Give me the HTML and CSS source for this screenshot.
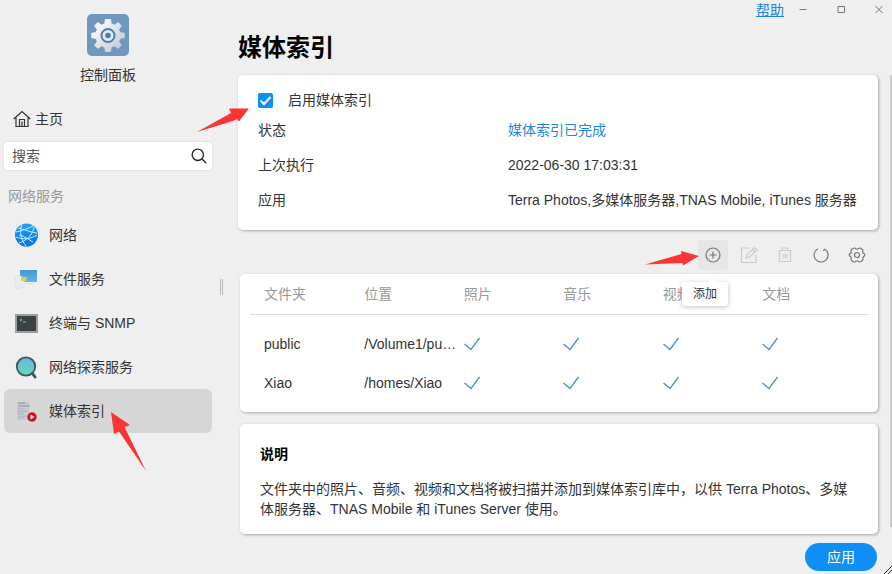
FILE: index.html
```html
<!DOCTYPE html>
<html lang="zh-CN">
<head>
<meta charset="utf-8">
<title>媒体索引</title>
<link rel="stylesheet" href="styles.css">
</head>
<body>
<svg class="defs" aria-hidden="true">
  <defs>
    <symbol id="tick" viewBox="0 0 16 14"><path d="M.5 7 7 12.500 15.500 1" fill="none" stroke="#4a8fd6" stroke-width="1.300"/></symbol>
    <linearGradient id="gear-fill" gradientUnits="userSpaceOnUse" x1="-12" y1="-12" x2="12" y2="12"><stop offset="0" stop-color="#fafbfd"/><stop offset="1" stop-color="#c6ccd8"/></linearGradient>
    <linearGradient id="globe-fill" x1="0" y1="0" x2="0" y2="1"><stop offset="0" stop-color="#1ba4fa"/><stop offset="1" stop-color="#0b6fe2"/></linearGradient>
    <linearGradient id="screen-fill" x1="0" y1="0" x2="0" y2="1"><stop offset="0" stop-color="#4199d3"/><stop offset="1" stop-color="#62b6e4"/></linearGradient>
    <linearGradient id="lens-fill" x1="0" y1="0" x2="0" y2="1"><stop offset="0" stop-color="#6cb2e2"/><stop offset="1" stop-color="#5fe0b8"/></linearGradient>
  </defs>
</svg>
<div class="window">
  <aside class="sidebar">
    <div class="brand">
      <svg width="44" height="44" viewBox="0 0 44 44" aria-hidden="true">
        <rect x="1" y="1" width="42" height="42" rx="5" fill="#7098bc"/>
        <g transform="translate(22 22.500)">
          <path fill="url(#gear-fill)" stroke="url(#gear-fill)" stroke-linejoin="round" d="M-2.500-16h5l.7 4.300 3.300 1.400 3.600-2.600 3.200 3.200-2.600 3.600 1.400 3.300 4.100.5v4.600l-4.100.5-1.400 3.300 2.600 3.600-3.200 3.200-3.600-2.600-3.300 1.400-.7 4.300h-5l-.7-4.300-3.300-1.400-3.600 2.600-3.200-3.200 2.600-3.600-1.400-3.300-4.100-.5v-4.600l4.100-.5 1.400-3.300-2.600-3.600 3.200-3.200 3.600 2.600 3.300-1.400z"/>
          <circle r="6.500" fill="#e3e9f1" stroke="#4f7ea5" stroke-width="2"/>
          <circle r="2.800" fill="#4f7ea5"/>
        </g>
      </svg>
      <span>控制面板</span>
    </div>
    <a class="home" href="#home">
      <svg width="18" height="18" viewBox="0 0 18 18" fill="none" stroke="#333" stroke-width="1.200" aria-hidden="true"><path d="M.7 9 9 1.500 17.300 9M3 7.500v9h12v-9M6.500 16.500V9.500h5v7M9 11.500v5M6.500 9.500h5"/></svg>
      主页
    </a>
    <div class="search">
      <input type="text" placeholder="搜索" aria-label="搜索">
      <svg width="16" height="16" viewBox="0 0 16 16" fill="none" stroke="#222" stroke-width="1.300" aria-hidden="true"><circle cx="6.800" cy="6.800" r="5.700"/><path d="m11 11 4.300 4.300"/></svg>
    </div>
    <h2 class="group">网络服务</h2>
    <nav class="nav">
      <a href="#network">
        <svg width="24" height="24" viewBox="0 0 24 24" aria-hidden="true"><circle cx="12.500" cy="12" r="11.500" fill="url(#globe-fill)"/><g fill="none" stroke="#c9ecff" stroke-width="1"><path d="M2 9C8 8 15 5 19 3M4 5c7 1 13 5 19 5M2 14c7 3 15 2 21-2M8 1.500C5 8 7 17 12 23M20 4c-1 8-8 14-15 16M5 12c6 1 10 5 14 7"/></g></svg>
        网络
      </a>
      <a href="#files">
        <svg width="24" height="24" viewBox="0 0 24 24" aria-hidden="true"><path d="M6 3h17v12H6z" fill="url(#screen-fill)"/><path d="M1 9h6l3 2v9l-7 2-2-3z" fill="#eceaf2" stroke="#d8d6e2" stroke-width=".5"/><path d="M7 10h6l-1 4H7z" fill="#c8d84a"/><path d="M12 16h8v1h-8z" fill="#d3dde7"/></svg>
        文件服务
      </a>
      <a href="#terminal">
        <svg width="24" height="24" viewBox="0 0 24 24" aria-hidden="true"><rect x="2" y="4" width="21" height="17" fill="#3c4143" stroke="#9c9fa1" stroke-width="2"/><path d="m6 8 2 1-2 1M9 11h3" fill="none" stroke="#8dcfc5" stroke-width=".8"/></svg>
        终端与 SNMP
      </a>
      <a href="#discovery">
        <svg width="24" height="24" viewBox="0 0 24 24" aria-hidden="true"><circle cx="12" cy="11.500" r="9.200" fill="url(#lens-fill)" stroke="#3f5660" stroke-width="1.800"/><path d="m18.500 18.500 2.500 3.500" stroke="#3f5660" stroke-width="3" stroke-linecap="round"/></svg>
        网络探索服务
      </a>
      <a class="active" href="#media" aria-current="page">
        <svg width="24" height="24" viewBox="0 0 24 24" aria-hidden="true"><path d="M3 3h12v18H3z" fill="#c5cad2"/><path d="M4 4h7M4 7h12" stroke="#8e95a6"/><path d="M4 10h6M4 12.500h9M4 15h6M4 18h7" stroke="#adb3bf" stroke-width="1"/><circle cx="18" cy="18" r="4.700" fill="#c9101f"/><path d="m16.500 15.500 4 2.500-4 2.500z" fill="#fff"/></svg>
        媒体索引
      </a>
    </nav>
  </aside>
  <div class="splitter"></div>
  <main class="main">
    <header class="titlebar">
      <a class="help" href="#help">帮助</a>
      <button type="button" aria-label="最小化"><svg width="10" height="10" viewBox="0 0 10 10"><path d="M1.500 4.500h7"/></svg></button>
      <button type="button" aria-label="最大化"><svg width="10" height="10" viewBox="0 0 10 10"><path d="M2 1.500h6.500v6H2z"/></svg></button>
      <button type="button" aria-label="关闭"><svg width="10" height="10" viewBox="0 0 10 10"><path d="m1.500 1 7 7m0-7-7 7"/></svg></button>
    </header>
    <h1>媒体索引</h1>
    <div class="scroller">
      <div class="content">
        <section class="card status">
          <label class="enable"><input type="checkbox" checked>启用媒体索引</label>
          <dl>
            <dt>状态</dt><dd class="done">媒体索引已完成</dd>
            <dt>上次执行</dt><dd>2022-06-30 17:03:31</dd>
            <dt>应用</dt><dd>Terra Photos,多媒体服务器,TNAS Mobile, iTunes 服务器</dd>
          </dl>
        </section>
        <div class="toolbar">
          <div class="tool-add">
            <button class="hovered" type="button" aria-label="添加"><svg width="18" height="18" viewBox="0 0 18 18"><circle cx="9" cy="9" r="7"/><path d="M9 5.500v7M5.500 9h7"/></svg></button>
            <span class="tooltip" role="tooltip">添加</span>
          </div>
          <button type="button" aria-label="编辑" disabled><svg width="18" height="18" viewBox="0 0 18 18"><path d="M10 2H1.500v14.500H16V9M6 12l1-3.500L14.500 1.500 17 4l-7.500 7zM12.500 3.500 15 6"/></svg></button>
          <button type="button" aria-label="删除" disabled><svg width="18" height="18" viewBox="0 0 18 18"><path d="M2.500 4.500h13M6 4V2h6v2M3.500 4.500v11h11v-11M7 8v4.500M9 8v4.500M11 8v4.500"/></svg></button>
          <button type="button" aria-label="刷新"><svg width="18" height="18" viewBox="0 0 18 18"><path d="M6 2.700a7 7 0 1 0 6.500.2M12.500 2.900l-1 2"/></svg></button>
          <button type="button" aria-label="设置"><svg width="18" height="18" viewBox="0 0 18 18"><path d="M5.500 2.200q1.500-.6 2.200.5 1.300.7 2.600 0 .7-1.100 2.200-.5l2 1.300q.8 1 .2 2.200 0 1.300 1.200 1.900.9.600.9 1.400t-.9 1.400q-1.200.6-1.200 1.900.6 1.200-.2 2.200l-2 1.300q-1.500.6-2.200-.5-1.300-.7-2.600 0-.7 1.100-2.200.5l-2-1.300q-.8-1-.2-2.200 0-1.300-1.200-1.900-.9-.6-.9-1.400t.9-1.400q1.200-.6 1.200-1.900-.6-1.200.2-2.200z"/><circle cx="9" cy="9" r="2.500"/></svg></button>
        </div>
        <section class="card folders">
          <table>
            <thead><tr><th>文件夹</th><th>位置</th><th>照片</th><th>音乐</th><th>视频</th><th>文档</th></tr></thead>
            <tbody>
              <tr><td>public</td><td>/Volume1/public</td><td><svg role="img" aria-label="是"><use href="#tick"/></svg></td><td><svg role="img" aria-label="是"><use href="#tick"/></svg></td><td><svg role="img" aria-label="是"><use href="#tick"/></svg></td><td><svg role="img" aria-label="是"><use href="#tick"/></svg></td></tr>
              <tr><td>Xiao</td><td>/homes/Xiao</td><td><svg role="img" aria-label="是"><use href="#tick"/></svg></td><td><svg role="img" aria-label="是"><use href="#tick"/></svg></td><td><svg role="img" aria-label="是"><use href="#tick"/></svg></td><td><svg role="img" aria-label="是"><use href="#tick"/></svg></td></tr>
            </tbody>
          </table>
        </section>
        <section class="card note">
          <h2>说明</h2>
          <p>文件夹中的照片、音频、视频和文档将被扫描并添加到媒体索引库中，以供 Terra Photos、多媒体服务器、TNAS Mobile 和 iTunes Server 使用。</p>
        </section>
      </div>
      <div class="rail"></div>
    </div>
    <footer><button class="apply" type="button">应用</button></footer>
  </main>
  <svg class="pointer to-checkbox" width="54" height="26" viewBox="0 0 54 26" aria-hidden="true"><path d="M1 25 35 6 33 1.500 53 1.500 43 14.500 41 12 37 14z"/></svg>
  <svg class="pointer to-add" width="55" height="18" viewBox="0 0 55 18" aria-hidden="true"><path d="M0 14.500 36.500 4 36 1 54 6 38 15.500 37.500 13z"/></svg>
  <svg class="pointer to-media" width="36" height="60" viewBox="0 0 36 60" aria-hidden="true"><path d="M0 0 19 13 13.500 15 35 59 8 19.500 3 22z"/></svg>
  <svg class="grip" width="8" height="8" viewBox="0 0 8 8" aria-hidden="true"><path d="m0 8 8-8M4 8l4-4"/></svg>
</div>
</body>
</html>
```
FILE: styles.css
```css
* {
  box-sizing: border-box;
}

body {
  margin: 0;
  background: #efefef;
  color: #333;
  font: 14px/20px "Liberation Sans", "Noto Sans CJK SC", sans-serif;
}

h1, h2, p, dl, dd {
  margin: 0;
}

button, input {
  font: inherit;
}

button {
  padding: 0;
  border: 0;
  background: none;
}

a {
  color: inherit;
  text-decoration: none;
}

.defs {
  position: absolute;
  width: 0;
  height: 0;
}

.window {
  position: relative;
  display: flex;
  min-height: 100vh;
  overflow: hidden;
}

.sidebar {
  flex: none;
  width: 220px;
  padding: 13px 8px 0 4px;
}

.brand {
  display: flex;
  flex-direction: column;
  align-items: center;
  gap: 8px;
}

.home {
  display: flex;
  align-items: center;
  gap: 4px;
  height: 28px;
  margin-top: 20px;
  padding-left: 9px;
}

.search {
  display: flex;
  align-items: center;
  height: 28px;
  margin-top: 9px;
  padding: 0 5px 0 8px;
  border-radius: 4px;
  background: #fff;
  box-shadow: 0 0 1px 1px #e6e6e6;
}

.search input {
  flex: 1;
  min-width: 0;
  padding: 0;
  border: 0;
  outline: 0;
  background: none;
}

.search input::placeholder {
  color: #555;
}

.group {
  margin: 16px 0 7px;
  padding-left: 4px;
  color: #999;
  font-size: 14px;
  font-weight: normal;
}

.nav a {
  display: flex;
  align-items: center;
  gap: 11px;
  height: 44px;
  padding-left: 10px;
  border-radius: 6px;
}

.nav .active {
  background: #d6d6d6;
}

.splitter {
  flex: none;
  align-self: center;
  width: 3px;
  height: 16px;
  border: solid #bbb;
  border-width: 0 1px;
}

.main {
  flex: 1;
  min-width: 0;
  padding-left: 15px;
}

.titlebar {
  display: flex;
  justify-content: flex-end;
  gap: 14px;
  height: 20px;
  padding-right: 1px;
}

.help {
  margin-right: -7px;
  color: #1e86e0;
  text-decoration: underline;
}

.titlebar button {
  width: 24px;
}

.titlebar svg {
  display: block;
  margin: auto;
  fill: none;
  stroke: #777;
}

h1 {
  color: #000;
  font-size: 24px;
  line-height: 55px;
}

.scroller {
  display: flex;
}

.content {
  flex: 1;
  min-width: 0;
  padding-right: 12px;
}

.rail {
  width: 2px;
  margin-bottom: 7px;
  background: #ccc;
}

.card {
  border-radius: 5px;
  background: #fff;
  box-shadow: 1px 1px 3px rgba(0, 0, 0, .3);
}

.status {
  padding: 12px 20px;
}

.enable {
  display: flex;
  align-items: center;
  gap: 15px;
  height: 26px;
}

.enable input {
  appearance: none;
  width: 15px;
  height: 15px;
  margin: 0;
  border-radius: 2px;
  background: #0f8ff5 url("data:image/svg+xml,%3Csvg xmlns='http://www.w3.org/2000/svg' viewBox='0 0 15 15'%3E%3Cpath d='m2.500 7.500 3.500 3.500 6.500-7' fill='none' stroke='white' stroke-width='2'/%3E%3C/svg%3E");
}

.status dl {
  display: grid;
  grid-template-columns: 250px 1fr;
  line-height: 35px;
}

.done {
  color: #1e86e0;
}

.toolbar {
  display: flex;
  justify-content: flex-end;
  gap: 6px;
  margin: 10px 6px 4px;
}

.toolbar button {
  display: flex;
  align-items: center;
  justify-content: center;
  width: 30px;
  height: 30px;
  border-radius: 4px;
}

.toolbar svg {
  fill: none;
  stroke: #777;
  stroke-width: 1.2;
}

.toolbar button:disabled svg {
  stroke: #ccc;
}

.toolbar .hovered {
  background: #e6e6e6;
}

.tool-add {
  position: relative;
}

.tooltip {
  position: absolute;
  z-index: 1;
  top: 42px;
  right: 0;
  padding: 2px 11px;
  border-radius: 3px;
  background: #fff;
  box-shadow: 0 1px 5px rgba(0, 0, 0, .25);
  font-size: 12px;
  white-space: nowrap;
}

.tooltip::before {
  content: "";
  position: absolute;
  right: 10px;
  bottom: 100%;
  border: 5px solid transparent;
  border-top-width: 0;
  border-bottom-color: #fff;
}

.folders {
  margin-left: 2px;
  padding: 0 10px 10px;
}

table {
  width: 100%;
  table-layout: fixed;
  border-collapse: collapse;
}

th, td {
  width: 16.1%;
  padding: 0 6px 0 0;
  overflow: hidden;
  text-align: left;
  text-overflow: ellipsis;
  white-space: nowrap;
}

th {
  height: 40px;
  border-bottom: 1px solid #ddd;
  color: #999;
  font-weight: normal;
}

th:first-child, td:first-child {
  width: 18.5%;
  padding-left: 14px;
}

th:last-child {
  width: auto;
}

td {
  height: 39px;
}

tbody tr:first-child td {
  height: 49px;
  padding-top: 10px;
}

td svg {
  display: block;
  width: 16px;
  height: 14px;
}

.note {
  margin: 12px 0 0 2px;
  padding: 20px 20px 15px;
}

.note h2 {
  margin-bottom: 15px;
  color: #000;
  font-size: 14px;
}

footer {
  display: flex;
  justify-content: flex-end;
  padding: 9px 15px 3px 0;
}

.apply {
  width: 72px;
  height: 28px;
  border-radius: 14px;
  background: #0f8ff5;
  color: #fff;
}

.pointer {
  position: absolute;
  z-index: 2;
  fill: #fb3535;
  pointer-events: none;
}

.to-checkbox {
  top: 107px;
  left: 196px;
}

.to-add {
  top: 250px;
  left: 645px;
}

.to-media {
  top: 412px;
  left: 111px;
}

.grip {
  position: absolute;
  right: 0;
  bottom: 0;
  fill: none;
  stroke: #333;
}
```
